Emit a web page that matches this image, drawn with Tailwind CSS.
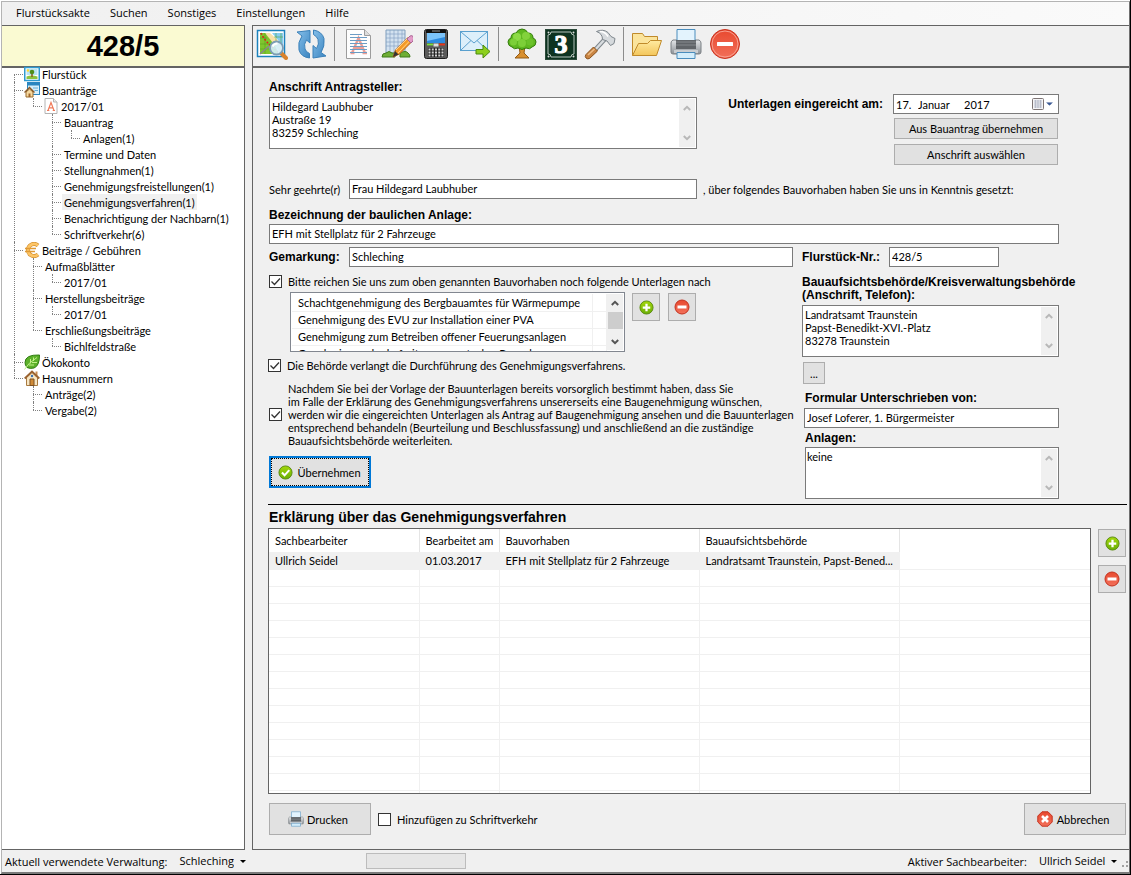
<!DOCTYPE html>
<html lang="de">
<head>
<meta charset="utf-8">
<title>Flurstücksakte 428/5</title>
<script src="https://cdn.jsdelivr.net/npm/@tailwindcss/browser@4"></script>
</head>
<body class="bg-white text-black">
<svg class="absolute size-0" aria-hidden="true">
  <defs>
    <linearGradient id="gGreen" x1="0" y1="0" x2="0" y2="1"><stop offset="0" stop-color="#a4d80a"/><stop offset="1" stop-color="#6aae06"/></linearGradient>
    <linearGradient id="gRed" x1="0" y1="0" x2="0" y2="1"><stop offset="0" stop-color="#e8492f"/><stop offset="1" stop-color="#f2705a"/></linearGradient>
    <linearGradient id="gBlue" x1="0" y1="0" x2="1" y2="1"><stop offset="0" stop-color="#86c0ea"/><stop offset="1" stop-color="#3a84c0"/></linearGradient>
    <linearGradient id="gFolder" x1="0" y1="0" x2="0" y2="1"><stop offset="0" stop-color="#ffeaa0"/><stop offset="1" stop-color="#f3c65c"/></linearGradient>
    <linearGradient id="gPrint" x1="0" y1="0" x2="0" y2="1"><stop offset="0" stop-color="#e4e6e8"/><stop offset="1" stop-color="#8d9297"/></linearGradient>
  </defs>
  <symbol id="plus" viewBox="0 0 16 16"><circle cx="8" cy="8" r="7" fill="url(#gGreen)" stroke="#5a8a10"/><path d="M8 4v8M4 8h8" stroke="#fff" stroke-width="2.4"/></symbol>
  <symbol id="minus" viewBox="0 0 16 16"><circle cx="8" cy="8" r="7" fill="url(#gRed)" stroke="#c4321f"/><path d="M3.500 8h9" stroke="#fff" stroke-width="3"/></symbol>
  <symbol id="ok" viewBox="0 0 16 16"><circle cx="8" cy="8" r="7" fill="url(#gGreen)" stroke="#5a8a10"/><path d="M4.200 8l2.800 3 5-5.600" fill="none" stroke="#fff" stroke-width="2.2"/></symbol>
  <symbol id="cancel" viewBox="0 0 16 16"><path d="M5 .8h6L15.200 5v6L11 15.200H5L.8 11V5z" fill="url(#gRed)" stroke="#c4321f"/><path d="M5 5l6 6M11 5l-6 6" stroke="#fff" stroke-width="2.6"/></symbol>
  <symbol id="printer" viewBox="0 0 32 32">
    <path d="M3 12q-2 1-2 3v9q0 2 2 2h26q2 0 2-2v-9q0-2-2-3z" fill="url(#gPrint)" stroke="#7b8085"/>
    <path d="M7 1.500h18v12H7z" fill="#e3f3fd" stroke="#4a8dbd"/>
    <rect x="6" y="12" width="20" height="9" fill="#606468"/><path d="M6 14h20M6 17h20" stroke="#85898d"/>
    <path d="M4 22h24v3H4z" fill="#c9cdd1"/>
    <path d="M7 24.500h18v6H7z" fill="#d3edfb" stroke="#4a8dbd"/>
  </symbol>
  <symbol id="up" viewBox="0 0 8 6"><path d="M.8 5L4 1.800 7.200 5" fill="none" stroke="currentColor" stroke-width="2"/></symbol>
  <symbol id="down" viewBox="0 0 8 6"><path d="M.8 1L4 4.200 7.200 1" fill="none" stroke="currentColor" stroke-width="2"/></symbol>
  <symbol id="tick" viewBox="0 0 13 13"><path d="M2.500 6.500l3 3 5.500-6" fill="none" stroke="#333" stroke-width="1.300"/></symbol>
  <symbol id="caret" viewBox="0 0 6 3"><path d="M0 0h6L3 3z" fill="currentColor"/></symbol>
</svg>

<div class="flex h-screen min-h-[875px] flex-col border-r border-b border-black bg-white pt-px pl-px font-['Lato','Liberation_Sans',sans-serif] text-[11px] leading-[13px]">
<div class="flex min-h-0 flex-1 flex-col border-t border-r border-b-2 border-l border-t-[#b4b4b4] border-r-[#707070] border-b-[#7a7a7a] border-l-[#b4b4b4] bg-[#f0f0f0]">

  <nav class="flex h-[23px] shrink-0 items-center gap-5 bg-linear-to-r from-[#f0f0f0] to-[#fafafa] pb-[2px] pl-[14px] font-['Open_Sans','Noto_Sans',sans-serif]">
    <button>Flurstücksakte</button><button>Suchen</button><button>Sonstiges</button><button>Einstellungen</button><button>Hilfe</button>
  </nav>

  <div class="flex min-h-0 flex-1 gap-[7px]">
    <aside class="flex w-[243px] shrink-0 flex-col border-t border-r border-b border-[#646464] bg-white">
      <h1 class="flex h-[42px] shrink-0 items-center justify-center border-b-2 border-[#646464] bg-[#fafad2] font-['Liberation_Sans',sans-serif] text-[29px] leading-none font-bold">428/5</h1>
      <ul class="-mt-[2px] ml-3 [&_li]:relative [&_li]:before:absolute [&_li]:before:top-0 [&_li]:before:bottom-0 [&_li]:before:left-0 [&_li]:before:border-l [&_li]:before:border-dotted [&_li]:before:border-[#808080] [&_li]:after:absolute [&_li]:after:top-2 [&_li]:after:left-0 [&_li]:after:w-[9px] [&_li]:after:border-t [&_li]:after:border-dotted [&_li]:after:border-[#808080] [&_li:last-child]:before:bottom-auto [&_li:last-child]:before:h-2 [&>li:first-child]:before:top-2 [&_ul]:pl-[19px] [&_a]:ml-[10px] [&_a]:flex [&_a]:h-4 [&_a]:w-fit [&_a]:items-center [&_a]:gap-[2px] [&_a]:px-[2px] [&_a]:whitespace-nowrap [&_svg]:-ml-[2px] [&_svg]:size-4 [&_svg]:shrink-0">
        <li><a href="#"><svg viewBox="0 0 16 16"><rect x=".75" y="1.500" width="14.500" height="13" fill="#fff" stroke="#2f9ad0" stroke-width="1.500"/><path d="M2.500 3h11v6h-11z" fill="#b9e4f4"/><path d="M2.500 10.500q5-2 11 0V13h-11z" fill="#8cc43f"/><path d="M8 7v4" stroke="#8a5a20" stroke-width="1.500"/><circle cx="8" cy="6" r="2.300" fill="#4f8f1c"/><circle cx="4" cy="4.500" r="1.200" fill="#ffd92a"/></svg>Flurstück</a></li>
        <li><a href="#"><svg viewBox="0 0 16 16"><rect x="3.500" y=".5" width="12" height="12" fill="#d6effb" stroke="#2a86c0"/><path d="M4 1h11v2.500H4z" fill="#2a86c0"/><path d="M9 6h5M10.500 8.500H14" stroke="#67aed6"/><path d="M2 10v5h7v-5L5.500 7z" fill="#f6d9a0" stroke="#9a6a2c"/><path d="M.5 10.500l5-5 5 5" fill="none" stroke="#8a5a28" stroke-width="1.300"/><path d="M4.500 11.500h2V15h-2z" fill="#a0662a"/></svg>Bauanträge</a>
          <ul><li><a href="#"><svg viewBox="0 0 16 16"><path d="M2 .5h8.500L14 4v11.500H2z" fill="#fff" stroke="#b4b4b4"/><path d="M10.500.5V4H14" fill="#eee" stroke="#b4b4b4"/><path d="M5 12.500l3-8 3 8M6.200 9.800h3.600M4 12.500h2.300M9.700 12.500H12" fill="none" stroke="#f07a5a" stroke-width="1.200"/></svg>2017/01</a>
            <ul>
              <li><a href="#">Bauantrag</a><ul><li><a href="#">Anlagen(1)</a></li></ul></li>
              <li><a href="#">Termine und Daten</a></li>
              <li><a href="#">Stellungnahmen(1)</a></li>
              <li><a href="#">Genehmigungsfreistellungen(1)</a></li>
              <li><a href="#" class="bg-[#f0f0f0]">Genehmigungsverfahren(1)</a></li>
              <li><a href="#">Benachrichtigung der Nachbarn(1)</a></li>
              <li><a href="#">Schriftverkehr(6)</a></li>
            </ul></li></ul></li>
        <li><a href="#"><svg viewBox="0 0 16 16"><path d="M14 3.500A6 6 0 0 0 4 8a6 6 0 0 0 10 4.500" fill="none" stroke="#d08c2c" stroke-width="4"/><path d="M14 3.500A6 6 0 0 0 4 8a6 6 0 0 0 10 4.500" fill="none" stroke="#fdc566" stroke-width="2.800"/><path d="M1 6.500h11M1 9.500h10" stroke="#e09a36" stroke-width="1.400"/></svg>Beiträge / Gebühren</a>
          <ul>
            <li><a href="#">Aufmaßblätter</a><ul><li><a href="#">2017/01</a></li></ul></li>
            <li><a href="#">Herstellungsbeiträge</a><ul><li><a href="#">2017/01</a></li></ul></li>
            <li><a href="#">Erschließungsbeiträge</a><ul><li><a href="#">Bichlfeldstraße</a></li></ul></li>
          </ul></li>
        <li><a href="#"><svg viewBox="0 0 16 16"><path d="M15.500 1Q1 .5 1 8.500q0 3 2 5 3 1.500 7 .5 5.500-2 5.500-13z" fill="#5cb12a" stroke="#2f7d10"/><path d="M.5 15.500Q4 9 13 3.500M6.500 5v4.500M9.500 3.500V7M5 11h5M8 8.500h5" fill="none" stroke="#c2f08a"/></svg>Ökokonto</a></li>
        <li><a href="#"><svg viewBox="0 0 16 16"><path d="M2.500 7.500v8h11v-8L8 2.500z" fill="#f7e6c4" stroke="#a87a40"/><path d="M11.500 1.500h2v5h-2z" fill="#c78b50"/><path d="M.7 8.500L8 1.500l7.300 7" fill="none" stroke="#9a6230" stroke-width="1.800"/><path d="M6 9h4v6.500H6z" fill="#d08a36" stroke="#7d5020"/><circle cx="8" cy="6" r="1.200" fill="#3b70b0"/></svg>Hausnummern</a>
          <ul><li><a href="#">Anträge(2)</a></li><li><a href="#">Vergabe(2)</a></li></ul></li>
      </ul>
    </aside>

    <main class="flex min-w-0 flex-1 flex-col border-t border-b border-l border-[#646464]">
      <div class="flex h-[42px] shrink-0 items-center gap-[7px] border-b-2 border-[#646464] pb-1 pl-[3px] [&_svg]:size-8">
        <button aria-label="Karte"><svg viewBox="0 0 32 32"><rect x="1.500" y="2.500" width="27" height="26" fill="#fff" stroke="#1c82bd" stroke-width="1.500"/><path d="M4 5h9l10 21H4z" fill="#7fc52e"/><path d="M9 5l16 20h2v-8L14 5z" fill="#f9e0a8"/><path d="M16 5h11v13z" fill="#86cdf0"/><path d="M4 10h7M4 16h12M4 21h14M9 5v21M20 5v8M25 5v12M18 9h9" stroke="#4d9c1c" stroke-opacity=".5"/><path d="M5 5q4 9 17 19" fill="none" stroke="#d42a1a" stroke-width="1.600" stroke-dasharray="2 1.500"/><path d="M4 26l9-8" stroke="#888" stroke-width="1.500"/><path d="M25 25l5 5" stroke="#d9822c" stroke-width="4" stroke-linecap="round"/><circle cx="20.500" cy="20" r="6.500" fill="#d4effc" fill-opacity=".9" stroke="#7d9db4" stroke-width="1.800"/><path d="M16.500 18.500q1.500-3 5-3" fill="none" stroke="#fff" stroke-width="2"/></svg></button>
        <button aria-label="Aktualisieren"><svg viewBox="0 0 32 32"><path d="M2 4L15 2.500V15L11.500 12Q8.500 16 10 21q1 3 4.500 4.500V30Q6 29 4 22 2.500 14 7 8z" fill="url(#gBlue)" stroke="#3a80b8"/><path d="M31 28L18 30V17.500l3.500 3Q24.500 16 23 11.500q-1-3-4.500-5V2Q27 3.500 29 10.500q1 8-3 14z" fill="url(#gBlue)" stroke="#3a80b8"/></svg></button>
        <span class="h-[34px] w-px bg-[#8c8c8c]"></span>
        <button aria-label="Textdokument"><svg viewBox="0 0 32 32"><path d="M4.500 1.500h18l6 6v23h-24z" fill="#fdfdfd" stroke="#9c9c9c"/><path d="M22.500 1.500v6h6" fill="#ddd" stroke="#9c9c9c"/><path d="M10 25l6.500-15L23 25M12.500 20h8M8.500 25h4M20.500 25H25" fill="none" stroke="#eb9d96" stroke-width="2.400"/><path d="M8 6.500h12M8 9.500h17M8 12.500h17M8 15.500h17M8 18.500h17M8 21.500h17M8 24.500h17" stroke="#6c9cc4"/></svg></button>
        <button aria-label="Plan zeichnen"><svg viewBox="0 0 32 32"><path d="M5 2h19v23H5z" fill="#d3e2f0" stroke="#7f9dbc"/><path d="M5 6h19M5 10h19M5 14h19M5 18h19M9 2v23M13 2v23M17 2v23M21 2v23" stroke="#7c9cc0" stroke-width=".6"/><path d="M1 29q0-4 4-4 3-3 6 0h3v4zM19 29v-4q6-3 8 0 2 1 2 4z" fill="#6fae35" stroke="#3f7a1a"/><path d="M12 29l2.500-7L27 9.500l4 4L18.500 26z" fill="#f59a27" stroke="#b5611a"/><path d="M15 22L27.500 9.500M17 25L29.500 12" stroke="#ffd38a"/><path d="M12 29l2-6 3.500 3.500z" fill="#333"/><path d="M26 11l3-3q2-1 3 .5t0 4.500l-2 2z" fill="#e39ac8" stroke="#a96894"/></svg></button>
        <button aria-label="Mobilgerät"><svg viewBox="0 0 32 32"><rect x="4.500" y="1.500" width="23" height="29" rx="2" fill="#5a5a5a" stroke="#1c1c1c"/><path d="M6 2h20v3H6z" fill="#111"/><rect x="7" y="5" width="18" height="10" fill="#2d8be0"/><path d="M7 5h18v4L7 13z" fill="#7cc4fa"/><path d="M12 3h8" stroke="#999"/><path d="M7 16.500h6" stroke="#7be03c" stroke-width="1.800"/><path d="M19 16.500h6" stroke="#e8341c" stroke-width="1.800"/><rect x="13.500" y="15.500" width="5" height="3" fill="#ddd"/><path d="M8 20h16v9H8z" fill="#222"/><path d="M8.500 21.500h15M8.500 24.500h15M8.500 27.500h15" stroke="#d0d0d0" stroke-width="1.800" stroke-dasharray="2 1.250"/></svg></button>
        <button aria-label="E-Mail senden"><svg viewBox="0 0 32 32"><rect x="1.500" y="3.500" width="27" height="19" fill="#dceffa" stroke="#5aa0ce"/><path d="M2 4l13 11L28 4M2 22l10-9.500M28 22l-10-9.500" fill="none" stroke="#5aa0ce"/><path d="M17 21.500h7V17l7 6.500-7 6.500v-4h-7z" fill="#8ccf1c" stroke="#4b8a0c"/></svg></button>
        <span class="h-[34px] w-px bg-[#8c8c8c]"></span>
        <button aria-label="Ökokonto"><svg viewBox="0 0 32 32"><path d="M13 18l1 7-5 5h14l-5-5 1-7z" fill="#d98f2e" stroke="#935a14"/><path d="M6 19q-4-1-4-5 0-3 3-4 0-5 5-5 2-4 6-4t6 4q5 0 5 5 3 1 3 4 0 4-4 5-2 3-6 1-4 3-8 0-4 2-6-1z" fill="#5fb820" stroke="#347d0c"/><circle cx="11" cy="9" r="4" fill="#8ddb46"/><circle cx="20" cy="8" r="4" fill="#83d23c"/><circle cx="7.500" cy="14" r="3.500" fill="#7ccf38"/><circle cx="24" cy="14" r="3.500" fill="#6bc22a"/><circle cx="16" cy="15" r="4" fill="#7ccf38"/></svg></button>
        <button aria-label="Hausnummer 3"><svg viewBox="0 0 32 32"><rect x=".5" y="1.500" width="31" height="30" fill="#0d3320" stroke="#2c4a3a"/><path d="M6 4h20q0 3 3 3v19q-3 0-3 3H6q0-3-3-3V7q3 0 3-3z" fill="none" stroke="#dfe8e2" stroke-width=".8"/><circle cx="3.500" cy="4.500" r="1" fill="#ddd"/><circle cx="28.500" cy="4.500" r="1" fill="#ddd"/><circle cx="3.500" cy="28.500" r="1" fill="#ddd"/><circle cx="28.500" cy="28.500" r="1" fill="#ddd"/><text x="16" y="25" text-anchor="middle" font-family="Liberation Serif, serif" font-size="26" font-weight="700" fill="#fff" stroke="#fff" stroke-width="1.200">3</text></svg></button>
        <button aria-label="Werkzeug"><svg viewBox="0 0 32 32"><path d="M21 11L10 23" stroke="#7e868c" stroke-width="4.500"/><path d="M21 11L10 23" stroke="#d8dcdf" stroke-width="2.500"/><path d="M12.500 3.500Q19 .5 24 4.500L27 8.500l4 2-1 5-3.500 2-3.500-4.500-4.500-1.500q0-6-6-8z" fill="#d6dadd" stroke="#7e868c"/><path d="M16 3.500q5 0 8 5" fill="none" stroke="#fff" stroke-width="1.500"/><path d="M9.500 19l4 4-8 7.500q-2 1-3.500-.5T2 26.500z" fill="#c98543" stroke="#8a531d"/><path d="M4 27l6.500-6" stroke="#eebc84" stroke-width="1.500"/></svg></button>
        <span class="h-[34px] w-px bg-[#8c8c8c]"></span>
        <button aria-label="Ordner öffnen"><svg viewBox="0 0 32 32"><path d="M1.500 27.500V5.500h10l2 3h13v6" fill="#fbe49c" stroke="#c08a2a"/><path d="M1.500 27.500l6-12h9l3-3h11l-5 15z" fill="url(#gFolder)" stroke="#c08a2a"/></svg></button>
        <button aria-label="Drucken"><svg><use href="#printer"/></svg></button>
        <button aria-label="Entfernen"><svg viewBox="0 0 32 32"><circle cx="16" cy="16" r="14.500" fill="url(#gRed)" stroke="#c9321e"/><circle cx="16" cy="16" r="13" fill="none" stroke="#f8a090"/><rect x="8" y="14" width="16" height="4" rx=".5" fill="#fff"/></svg></button>
      </div>

      <form class="flex min-h-0 flex-1 flex-col pr-[2px] pb-[14px] pl-[15px]" onsubmit="return false">
        <div class="mr-[68px] ml-px">
          <div class="flex pt-[13px]">
            <div class="min-w-0 flex-1">
              <label for="addr" class="block font-['Liberation_Sans',sans-serif] text-[12px] font-bold">Anschrift Antragsteller:</label>
              <div class="mt-[3px] flex h-[52px] border border-[#7a7a7a] bg-white">
                <textarea id="addr" class="min-w-0 flex-1 resize-none overflow-hidden px-[2px] pt-[2px] outline-none">Hildegard Laubhuber
Austraße 19
83259 Schleching</textarea>
                <span class="m-px flex w-4 flex-col items-center justify-between bg-[#f0f0f0] py-[6px] text-[#b8b8b8]"><svg class="h-[6px] w-2"><use href="#up"/></svg><svg class="h-[6px] w-2"><use href="#down"/></svg></span>
              </div>
            </div>
            <div class="flex w-[362px] shrink-0 items-start justify-end gap-[10px] pt-[13px]">
              <label for="day" class="pt-1 font-['Liberation_Sans',sans-serif] text-[12px] font-bold">Unterlagen eingereicht am:</label>
              <div class="w-[166px]">
                <div class="flex h-5 items-center border border-[#7a7a7a] bg-white pl-[2px]">
                  <input id="day" value="17." class="w-[22px] outline-none"><input aria-label="Monat" value="Januar" class="w-[46px] outline-none"><input aria-label="Jahr" value="2017" class="w-[40px] outline-none">
                  <button type="button" aria-label="Kalender" class="ml-auto flex items-center gap-[2px] pr-[5px] text-[#3c5a94]"><svg class="size-3" viewBox="0 0 12 12"><rect x=".5" y=".5" width="11" height="11" rx="1" fill="#f4f4f6" stroke="#7d7474"/><path d="M2 3h8M2 5h8M2 7h8M2 9h8M3.500 2v8M6 2v8M8.500 2v8" stroke="#aeb4c4" stroke-width=".8"/></svg><svg class="h-1 w-[7px]" viewBox="0 0 6 3"><use href="#caret"/></svg></button>
                </div>
                <div class="mx-px mt-1 flex flex-col gap-[5px]">
                  <button type="button" class="h-[21px] border border-[#adadad] bg-[#e1e1e1]">Aus Bauantrag übernehmen</button>
                  <button type="button" class="h-[21px] border border-[#adadad] bg-[#e1e1e1]">Anschrift auswählen</button>
                </div>
              </div>
            </div>
          </div>

          <div class="mt-[14px] flex h-5 items-center">
            <label for="sal" class="w-20 shrink-0">Sehr geehrte(r)</label>
            <input id="sal" value="Frau Hildegard Laubhuber" class="h-5 min-w-0 flex-1 border border-[#7a7a7a] bg-white px-[2px] pb-[2px] outline-none">
            <span class="w-[362px] shrink-0 pl-[6px]">, über folgendes Bauvorhaben haben Sie uns in Kenntnis gesetzt:</span>
          </div>

          <label for="bez" class="mt-[10px] mb-[2px] block font-['Liberation_Sans',sans-serif] text-[12px] font-bold">Bezeichnung der baulichen Anlage:</label>
          <input id="bez" value="EFH mit Stellplatz für 2 Fahrzeuge" class="block h-5 w-full border border-[#7a7a7a] bg-white px-[2px] pb-[2px] outline-none">

          <div class="mt-[3px] flex h-5 items-center">
            <label for="gem" class="w-20 shrink-0 font-['Liberation_Sans',sans-serif] text-[12px] font-bold">Gemarkung:</label>
            <input id="gem" value="Schleching" class="h-5 min-w-0 flex-1 border border-[#7a7a7a] bg-white px-[2px] pb-[2px] outline-none">
            <label for="fnr" class="ml-[9px] w-[87px] shrink-0 font-['Liberation_Sans',sans-serif] text-[12px] font-bold">Flurstück-Nr.:</label>
            <input id="fnr" value="428/5" class="mr-[60px] h-5 w-[110px] border border-[#7a7a7a] bg-white px-[2px] pb-[2px] outline-none">
          </div>

          <div class="flex gap-[9px]">
            <div class="min-w-0 flex-1 pt-2">
              <label class="flex items-center gap-[6px]"><span class="grid shrink-0"><input type="checkbox" checked class="peer col-start-1 row-start-1 size-[13px] appearance-none border border-[#333] bg-white"><svg class="pointer-events-none invisible col-start-1 row-start-1 size-[13px] peer-checked:visible"><use href="#tick"/></svg></span>Bitte reichen Sie uns zum oben genannten Bauvorhaben noch folgende Unterlagen nach</label>
              <div class="mt-1 ml-[21px] flex items-start">
                <div class="flex h-[60px] w-[335px] overflow-hidden border border-[#828790] bg-white p-px">
                  <table class="h-fit flex-1 border-collapse self-start [&_td]:h-[17px] [&_td]:border-r [&_td]:border-b [&_td]:border-[#f0f0f0] [&_td]:p-0 [&_td]:whitespace-nowrap [&_td:first-child]:pl-[6px]">
                    <tbody>
                      <tr><td>Schachtgenehmigung des Bergbauamtes für Wärmepumpe</td><td class="w-[14px]"></td></tr>
                      <tr><td>Genehmigung des EVU zur Installation einer PVA</td><td></td></tr>
                      <tr><td>Genehmigung zum Betreiben offener Feuerungsanlagen</td><td></td></tr>
                      <tr><td>Genehmigung der befreiten wassertechn. Bauanlagen</td><td></td></tr>
                    </tbody>
                  </table>
                  <span class="flex w-4 shrink-0 flex-col items-center bg-[#f0f0f0] pt-[6px] pb-[5px] text-[#555]"><svg class="h-[6px] w-2"><use href="#up"/></svg><span class="mt-[6px] h-[17px] w-[15px] bg-[#cdcdcd]"></span><svg class="mt-auto h-[6px] w-2"><use href="#down"/></svg></span>
                </div>
                <button type="button" aria-label="Unterlage hinzufügen" class="mt-px ml-[7px] grid size-7 place-items-center border border-[#adadad] bg-[#e1e1e1]"><svg class="size-[15px]"><use href="#plus"/></svg></button>
                <button type="button" aria-label="Unterlage entfernen" class="mt-px ml-2 grid size-7 place-items-center border border-[#adadad] bg-[#e1e1e1]"><svg class="size-4"><use href="#minus"/></svg></button>
              </div>
              <label class="mt-[7px] -ml-px flex items-center gap-[6px]"><span class="grid shrink-0"><input type="checkbox" checked class="peer col-start-1 row-start-1 size-[13px] appearance-none border border-[#333] bg-white"><svg class="pointer-events-none invisible col-start-1 row-start-1 size-[13px] peer-checked:visible"><use href="#tick"/></svg></span>Die Behörde verlangt die Durchführung des Genehmigungsverfahrens.</label>
              <label class="mt-[10px] flex items-center gap-[6px]"><span class="grid shrink-0"><input type="checkbox" checked class="peer col-start-1 row-start-1 size-[13px] appearance-none border border-[#333] bg-white"><svg class="pointer-events-none invisible col-start-1 row-start-1 size-[13px] peer-checked:visible"><use href="#tick"/></svg></span><span class="whitespace-nowrap">Nachdem Sie bei der Vorlage der Bauunterlagen bereits vorsorglich bestimmt haben, dass Sie<br>im Falle der Erklärung des Genehmigungsverfahrens unsererseits eine Baugenehmigung wünschen,<br>werden wir die eingereichten Unterlagen als Antrag auf Baugenehmigung ansehen und die Bauunterlagen<br>entsprechend behandeln (Beurteilung und Beschlussfassung) und anschließend an die zuständige<br>Bauaufsichtsbehörde weiterleiten.</span></label>
              <button type="submit" class="mt-[9px] h-8 w-[102px] border-2 border-[#0078d7] bg-[#e1e1e1]"><span class="flex h-full items-center justify-center gap-1 border border-dotted border-black pr-px"><svg class="size-[15px]"><use href="#ok"/></svg>Übernehmen</span></button>
            </div>

            <div class="w-[257px] shrink-0 pt-[9px]">
              <label for="beh" class="block font-['Liberation_Sans',sans-serif] text-[12px] font-bold whitespace-nowrap">Bauaufsichtsbehörde/Kreisverwaltungsbehörde<br>(Anschrift, Telefon):</label>
              <div class="mt-[3px] flex h-[52px] border border-[#7a7a7a] bg-white">
                <textarea id="beh" class="min-w-0 flex-1 resize-none overflow-hidden px-[2px] pt-[2px] outline-none">Landratsamt Traunstein
Papst-Benedikt-XVI.-Platz
83278 Traunstein</textarea>
                <span class="m-px flex w-4 flex-col items-center justify-between bg-[#f0f0f0] py-[6px] text-[#b8b8b8]"><svg class="h-[6px] w-2"><use href="#up"/></svg><svg class="h-[6px] w-2"><use href="#down"/></svg></span>
              </div>
              <button type="button" class="mt-[5px] ml-px block h-[22px] w-[22px] border border-[#adadad] bg-[#e1e1e1]">...</button>
              <label for="sig" class="mt-[8px] ml-[3px] block font-['Liberation_Sans',sans-serif] text-[12px] font-bold">Formular Unterschrieben von:</label>
              <div class="mt-[3px] ml-[2px]"><input id="sig" value="Josef Loferer, 1. Bürgermeister" class="block h-5 w-full border border-[#7a7a7a] bg-white px-[2px] pb-[2px] outline-none"></div>
              <label for="anl" class="mt-[4px] ml-[3px] block font-['Liberation_Sans',sans-serif] text-[12px] font-bold">Anlagen:</label>
              <div class="mt-[2px] ml-[3px] flex h-[52px] border border-[#7a7a7a] bg-white">
                <textarea id="anl" class="min-w-0 flex-1 resize-none overflow-hidden px-px pt-[2px] outline-none">keine</textarea>
                <span class="m-px flex w-4 flex-col items-center justify-between bg-[#f0f0f0] py-[6px] text-[#b8b8b8]"><svg class="h-[6px] w-2"><use href="#up"/></svg><svg class="h-[6px] w-2"><use href="#down"/></svg></span>
              </div>
            </div>
          </div>
        </div>

        <hr class="mt-[5px] border-black">
        <h2 class="mt-[5px] mb-[3px] pl-px font-['Liberation_Sans',sans-serif] text-[14px] leading-[15px] font-bold">Erklärung über das Genehmigungsverfahren</h2>
        <div class="flex min-h-0 flex-1 gap-[7px]">
          <div class="min-w-0 flex-1 overflow-hidden border border-[#646464] bg-white">
            <table class="w-full table-fixed border-collapse text-left [&_td]:h-[17px] [&_td]:truncate [&_td]:border-r [&_td]:border-b [&_td]:border-[#f0f0f0] [&_td]:p-0 [&_td]:pl-[6px] [&_td:last-child]:border-r-0 [&_th]:h-[23px] [&_th]:border-r [&_th]:border-[#e5e5e5] [&_th]:p-0 [&_th]:pl-[6px] [&_th]:font-normal [&_th:last-child]:border-r-0">
              <thead><tr><th class="w-[150px]">Sachbearbeiter</th><th class="w-20">Bearbeitet am</th><th class="w-[200px]">Bauvorhaben</th><th class="w-[200px]">Bauaufsichtsbehörde</th><th></th></tr></thead>
              <tbody>
                <tr class="[&_td:not(:last-child)]:bg-[#f0f0f0]"><td>Ullrich Seidel</td><td>01.03.2017</td><td>EFH mit Stellplatz für 2 Fahrzeuge</td><td>Landratsamt Traunstein, Papst-Bened...</td><td></td></tr>
                <tr><td></td><td></td><td></td><td></td><td></td></tr><tr><td></td><td></td><td></td><td></td><td></td></tr>
                <tr><td></td><td></td><td></td><td></td><td></td></tr><tr><td></td><td></td><td></td><td></td><td></td></tr>
                <tr><td></td><td></td><td></td><td></td><td></td></tr><tr><td></td><td></td><td></td><td></td><td></td></tr>
                <tr><td></td><td></td><td></td><td></td><td></td></tr><tr><td></td><td></td><td></td><td></td><td></td></tr>
                <tr><td></td><td></td><td></td><td></td><td></td></tr><tr><td></td><td></td><td></td><td></td><td></td></tr>
                <tr><td></td><td></td><td></td><td></td><td></td></tr><tr><td></td><td></td><td></td><td></td><td></td></tr>
                <tr><td></td><td></td><td></td><td></td><td></td></tr><tr><td></td><td></td><td></td><td></td><td></td></tr>
              </tbody>
            </table>
          </div>
          <div class="flex flex-col gap-2 pt-px pr-px">
            <button type="button" aria-label="Erklärung hinzufügen" class="grid size-7 place-items-center border border-[#adadad] bg-[#e1e1e1]"><svg class="size-[15px]"><use href="#plus"/></svg></button>
            <button type="button" aria-label="Erklärung entfernen" class="grid size-7 place-items-center border border-[#adadad] bg-[#e1e1e1]"><svg class="size-4"><use href="#minus"/></svg></button>
          </div>
        </div>
        <div class="mt-[9px] flex h-8 items-center pr-px pl-px">
          <button type="button" class="flex h-8 w-[102px] items-center justify-center gap-[3px] border border-[#adadad] bg-[#e1e1e1] pr-1"><svg class="size-4"><use href="#printer"/></svg>Drucken</button>
          <label class="ml-[7px] flex items-center gap-[6px]"><input type="checkbox" class="size-[13px] appearance-none border border-[#333] bg-white checked:bg-[#333]">Hinzufügen zu Schriftverkehr</label>
          <button type="button" class="ml-auto flex h-8 w-[102px] items-center justify-center gap-1 border border-[#adadad] bg-[#e1e1e1] pr-1"><svg class="size-4"><use href="#cancel"/></svg>Abbrechen</button>
        </div>
      </form>
    </main>
  </div>

  <footer class="flex h-[22px] shrink-0 items-center pl-[3px] font-['Open_Sans','Noto_Sans',sans-serif]">
    <div class="flex w-[361px] items-center"><label for="verw">Aktuell verwendete Verwaltung:</label><select id="verw" class="ml-3 h-4 appearance-none leading-4 outline-none"><option>Schleching</option></select><svg class="ml-[6px] h-[3px] w-[6px]"><use href="#caret"/></svg></div>
    <div role="progressbar" aria-label="Fortschritt" aria-valuenow="0" class="h-4 w-[100px] border border-[#bcbcbc] bg-[#e6e6e6]"></div>
    <div class="ml-auto flex items-center"><label for="sb">Aktiver Sachbearbeiter:</label><select id="sb" class="ml-3 h-4 appearance-none leading-4 outline-none"><option>Ullrich Seidel</option></select><svg class="ml-[5px] h-[3px] w-[6px]"><use href="#caret"/></svg>
    <svg class="ml-1 size-2 self-end" viewBox="0 0 8 8"><path d="M5 0h2v2H5zM5 4h2v2H5zM1 4h2v2H1z" fill="#a0a0a0"/></svg></div>
  </footer>
</div>
</div>
</body>
</html>
